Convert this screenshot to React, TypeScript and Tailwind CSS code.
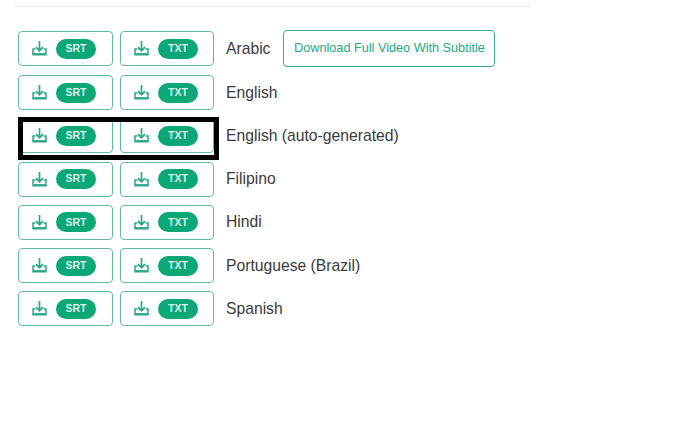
const languages = [
  "Arabic",
  "English",
  "English (auto-generated)",
  "Filipino",
  "Hindi",
  "Portuguese (Brazil)",
  "Spanish",
]

function TrayIcon() {
  return (
    <svg viewBox="0 0 15 15" className="h-[15px] w-[15px] text-[#2aa887]" fill="none" stroke="currentColor" strokeWidth="1.7">
      <path d="M7.500 0v9.500M4 6.200l3.500 3.500L11 6.200" />
      <path d="M3.500 8H1v5.800h13V8h-2.500" strokeWidth="1.5" />
      <path d="M1 13h13" strokeWidth="1.800" />
    </svg>
  )
}

function FormatButton({ label, width }: { label: string; width: string }) {
  return (
    <button className={`flex h-[35px] items-center rounded-[4px] border border-[#62baa4] bg-white pl-[13px] ${width}`}>
      <TrayIcon />
      <span className="ml-[9px] flex h-[20px] w-[40px] items-center justify-center rounded-full bg-[#0ba777] text-[10.5px] font-bold text-[#d9f2ea]">
        {label}
      </span>
    </button>
  )
}

export default function App() {
  return (
    <div className="relative h-[441px] w-[700px] overflow-hidden bg-white font-['Liberation_Sans',Arial,sans-serif]">
      <div className="ml-[14px] mt-[6px] h-px w-[517px] bg-[#e8e8e8]" />
      <div className="ml-[18px] mt-[23px] flex flex-col gap-[8px]">
        {languages.map((name, i) => (
          <div key={name} className="flex min-h-[35.25px] items-center">
            <FormatButton label="SRT" width="w-[95px]" />
            <div className="ml-[7px]">
              <FormatButton label="TXT" width="w-[94px]" />
            </div>
            <span className="ml-[12px] text-[15.7px] leading-[22px] text-[#3a3a3a]">{name}</span>
            {i === 0 && (
              <button className="ml-[13px] h-[37px] w-[212px] rounded-[4px] border border-[#3fae92] bg-white text-[12.7px] text-[#22a982]">
                Download Full Video With Subtitle
              </button>
            )}
          </div>
        ))}
      </div>
      <div className="absolute left-[18px] top-[117px] h-[43px] w-[201px] border-[5px] border-black" />
    </div>
  )
}
